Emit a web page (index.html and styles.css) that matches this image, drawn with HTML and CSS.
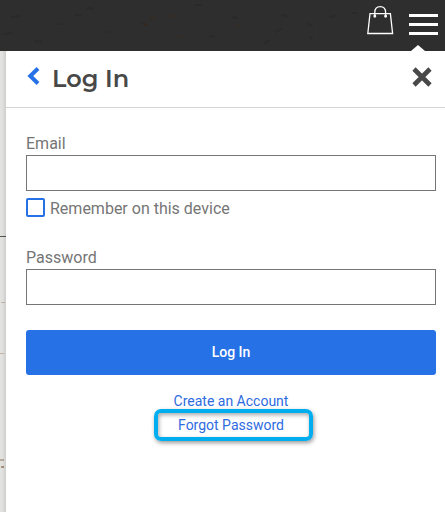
FILE: index.html
```html
<!DOCTYPE html>
<html lang="en">
<head>
    <meta charset="UTF-8">
    <meta name="viewport" content="width=device-width, initial-scale=1.0">
    <title>Log In</title>
    <link rel="stylesheet" href="styles.css">
</head>
<body>

    <header class="topbar">
        <svg class="grain" width="445" height="51" viewBox="0 0 445 51" aria-hidden="true">
            <g fill="none" stroke="#242321" stroke-width="2" stroke-linecap="round" opacity="0.35">
                <path d="M12 17l8-1M75 15h6M88 8l5 1M142 23l5 2M195 5h6M232 17l5 1M282 15l6 1M308 24l4 2M330 17l6-1M4 34l8-1M36 41l5 1M210 36l4 1M265 43l4-3M276 32l5-3M310 37l2 2M56 24h5M105 32h4M352 13h5"/>
            </g>
            <g fill="none" stroke="#3b2c1b" stroke-width="1.5" stroke-linecap="round" opacity="0.6">
                <path d="M150 18h7M170 16h7M177 37h4M236 26h3M143 24l4 1"/>
            </g>
        </svg>
        <a class="bag" href="#" aria-label="Shopping bag">
            <svg width="28" height="30" viewBox="0 0 28 30" fill="none" stroke="#fff" stroke-width="1.3">
                <path d="M4 8.6h20.4l2.2 19.9H1.8z"/>
                <path d="M8.8 11V7.5C8.8 3.7 11 1.6 14.2 1.6s5.4 2.1 5.4 5.9V11"/>
                <circle cx="8.8" cy="11.3" r="0.8" fill="#fff"/>
                <circle cx="19.6" cy="11.3" r="0.8" fill="#fff"/>
            </svg>
        </a>
        <button class="menu" aria-label="Menu">
            <span></span>
            <span></span>
            <span></span>
        </button>
    </header>

    <div class="page">
        <div class="wall"></div>
        <main class="panel">
            <div class="panel-header">
                <a class="back" href="#" aria-label="Back">
                    <svg width="13" height="18" viewBox="0 0 13 18" fill="none" stroke="#2671e6" stroke-width="4">
                        <path d="M11 1.5L3.3 9l7.7 7.5"/>
                    </svg>
                </a>
                <h1>Log In</h1>
                <button class="close" aria-label="Close">
                    <svg width="20" height="20" viewBox="0 0 20 20" fill="none" stroke="#484848" stroke-width="4.6">
                        <path d="M2 2l16 16M18 2L2 18"/>
                    </svg>
                </button>
            </div>

            <form class="login">
                <label class="label" for="email">Email</label>
                <input class="field" type="text" id="email">
                <label class="remember">
                    <input type="checkbox">
                    <span>Remember on this device</span>
                </label>

                <label class="label" for="password">Password</label>
                <input class="field" type="password" id="password">

                <button class="submit" type="button">Log In</button>
            </form>

            <div class="links">
                <a href="#">Create an Account</a>
                <a class="highlight" href="#">Forgot Password</a>
            </div>
        </main>
    </div>

</body>
</html>
```

FILE: styles.css
```css
*,
*::before,
*::after {
    box-sizing: border-box;
}

body {
    margin: 0;
    height: 512px;
    overflow: hidden;
    font-family: Roboto, sans-serif;
    color: #757575;
    background: white;
}

button {
    padding: 0;
    border: none;
    background: none;
}

svg {
    display: block;
}

/* Top Bar */
.topbar {
    position: relative;
    display: flex;
    justify-content: flex-end;
    gap: 15px;
    height: 51px;
    padding: 5px 7px 0 0;
    background: #2e2e2e;
}

/* Worn wood marks behind the icons */
.grain {
    position: absolute;
    top: 0;
    left: 0;
}

.bag,
.menu {
    position: relative;
}

.menu {
    display: flex;
    flex-direction: column;
    gap: 6px;
    width: 29px;
    height: 46px;
    padding-top: 9px;
}

.menu span {
    height: 3px;
    background: white;
}

/* Pointer joining the menu to the panel */
.menu::after {
    content: "";
    position: absolute;
    bottom: 0;
    left: 2px;
    width: 14px;
    height: 6px;
    background: white;
    clip-path: polygon(50% 0, 100% 100%, 0 100%);
}

/* Page */
.page {
    display: flex;
    height: 461px;
}

.wall {
    width: 6px;
    background:
        linear-gradient(to right, transparent 2px, rgba(0, 0, 0, 0.09)),
        linear-gradient(#56534d, #56534d) 0 185px / 6px 1px no-repeat,
        linear-gradient(#b9aba0, #b9aba0) 0 408px / 4px 2px no-repeat,
        linear-gradient(#a98f7c, #a98f7c) 1px 415px / 3px 2px no-repeat,
        linear-gradient(#c4b5a9, #c4b5a9) 1px 251px / 4px 1px no-repeat,
        linear-gradient(#c4b5a9, #c4b5a9) 0 302px / 4px 1px no-repeat,
        #e2e2e1;
}

.panel {
    flex: 1;
    background: white;
}

.panel-header {
    display: flex;
    align-items: center;
    height: 57px;
    padding: 0 13px 4px 21px;
    border-bottom: 1px solid #d4d4d4;
}

.back {
    margin-bottom: 2px;
}

h1 {
    flex: 1;
    margin: 3px 0 0 12px;
    font-family: Montserrat, Inter, sans-serif;
    font-size: 24px;
    font-weight: 600;
    line-height: 30px;
    color: #484848;
}

/* Form */
.login {
    display: flex;
    flex-direction: column;
    padding: 25px 9px 0 20px;
}

.label {
    margin-bottom: 1px;
    font-size: 16px;
    line-height: 21px;
}

.field {
    height: 36px;
    padding: 0 8px;
    border: 1px solid #757575;
    border-radius: 0;
    background: white;
}

.remember {
    display: flex;
    align-items: center;
    gap: 5px;
    height: 21px;
    margin: 6px 0 29px;
    font-size: 16px;
    line-height: 21px;
}

.remember input {
    appearance: none;
    width: 19px;
    height: 19px;
    margin: 0;
    border: 2px solid #2671e6;
    border-radius: 2px;
}

.remember span {
    padding-top: 2px;
}

.submit {
    height: 45px;
    margin-top: 25px;
    padding-bottom: 2px;
    border-radius: 3px;
    font-family: Roboto, sans-serif;
    font-size: 14px;
    font-weight: 500;
    color: white;
    background: #2671e6;
}

/* Links */
.links {
    display: flex;
    flex-direction: column;
    align-items: center;
    padding: 14px 9px 0 20px;
    font-size: 14px;
    line-height: 24px;
}

.links a {
    color: #2e6bdf;
    text-decoration: none;
}

.highlight {
    position: relative;
}

.highlight::before {
    content: "";
    position: absolute;
    top: -4px;
    left: -24px;
    width: 159px;
    height: 32px;
    border: 4px solid #00aeef;
    border-radius: 7px;
    box-shadow: 1px 2px 4px rgba(0, 0, 0, 0.4), inset 1px 2px 4px rgba(0, 0, 0, 0.35);
}
```
